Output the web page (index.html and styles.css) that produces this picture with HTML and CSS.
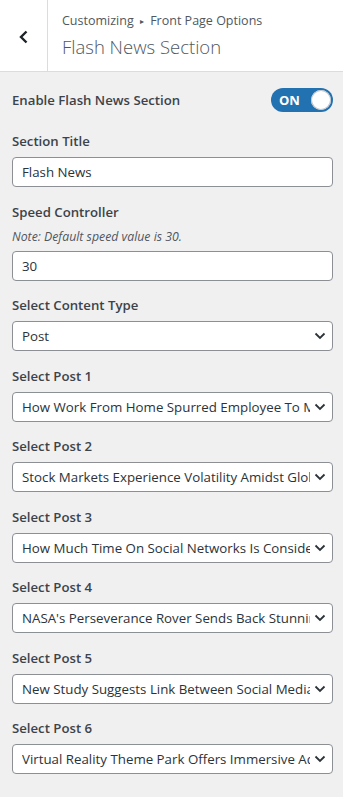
FILE: index.html
```html
<!DOCTYPE html>
<html lang="en">
<head>
<meta charset="UTF-8" />
<meta name="viewport" content="width=device-width, initial-scale=1" />
<title>Flash News Section</title>
<link rel="stylesheet" href="styles.css">
</head>
<body>
  <!-- Cabecera -->
  <header class="panel-head">
    <button class="back-btn" title="Back">
      <svg width="12" height="14" viewBox="0 0 12 14"><path d="M8.5 1.5 L3 7 L8.5 12.5" fill="none" stroke="#1d2327" stroke-width="2.4"/></svg>
    </button>
    <div class="head-text">
      <div class="crumbs">Customizing <span class="arrow">&#9656;</span> Front Page Options</div>
      <h1>Flash News Section</h1>
    </div>
  </header>

  <section class="controls">
    <div class="control toggle-row">
      <span class="label">Enable Flash News Section</span>
      <div class="toggle"><span>ON</span><i></i></div>
    </div>

    <div class="control">
      <span class="label">Section Title</span>
      <div class="field">Flash News</div>
    </div>

    <div class="control">
      <span class="label">Speed Controller</span>
      <span class="note">Note: Default speed value is 30.</span>
      <div class="field">30</div>
    </div>

    <div class="control">
      <span class="label">Select Content Type</span>
      <div class="field select"><span class="val">Post</span><svg class="chev" width="12" height="8" viewBox="0 0 12 8"><path d="M1.5 1.5 L6 6 L10.5 1.5" fill="none" stroke="#2c3338" stroke-width="1.8"/></svg></div>
    </div>

    <div id="posts"></div>
  </section>

<script>
  const posts = [
    'How Work From Home Spurred Employee To Make Changes',
    'Stock Markets Experience Volatility Amidst Global Uncertainty',
    'How Much Time On Social Networks Is Considered Healthy',
    "NASA's Perseverance Rover Sends Back Stunning Images",
    'New Study Suggests Link Between Social Media And Anxiety',
    'Virtual Reality Theme Park Offers Immersive Adventures'
  ];
  const contenedor = document.getElementById('posts');
  posts.forEach((titulo, i) => {
    const div = document.createElement('div');
    div.className = 'control';
    div.innerHTML = `
      <span class="label">Select Post ${i + 1}</span>
      <div class="field select"><span class="val">${titulo}</span><svg class="chev" width="12" height="8" viewBox="0 0 12 8"><path d="M1.5 1.5 L6 6 L10.5 1.5" fill="none" stroke="#2c3338" stroke-width="1.8"/></svg></div>
    `;
    contenedor.appendChild(div);
  });
</script>
</body>
</html>
```

FILE: styles.css
```css
body, html {
  margin: 0; padding: 0;
  font-family: "Open Sans", "Noto Sans", sans-serif;
  background: #f0f0f1;
  color: #2c3338;
}
.panel-head {
  display: flex;
  height: 72px;
  background: #fff;
  border-bottom: 1px solid #dcdcde;
  box-sizing: border-box;
}
.back-btn {
  width: 48px;
  border: none;
  border-right: 1px solid #dcdcde;
  background: #fff;
  display: flex;
  align-items: center;
  justify-content: center;
  padding: 0;
  padding-top: 2px;
}
.head-text {
  padding: 11px 0 0 14px;
  color: #50575e;
}
.crumbs {
  font-size: 12.5px;
  line-height: 20px;
}
.crumbs .arrow {
  font-size: 8px;
  margin: 0 3px;
  vertical-align: 1px;
}
h1 {
  margin: 3px 0 0;
  font-size: 18.5px;
  font-weight: 300;
  line-height: 26px;
}
.controls {
  padding: 16px 10px 0 12px;
}
.control {
  display: flex;
  flex-direction: column;
  margin-bottom: 14.5px;
}
.label {
  font-size: 13.2px;
  font-weight: 600;
  color: #3c434a;
  line-height: 20px;
  margin-bottom: 6px;
}
.note {
  font-size: 12.3px;
  font-style: italic;
  color: #50575e;
  line-height: 18px;
  margin: 0 0 5px;
}
.toggle-row {
  flex-direction: row;
  align-items: center;
  justify-content: space-between;
  margin: 0 0 19px;
}
.toggle-row .label { margin: 0; }
.toggle {
  width: 62px;
  height: 24px;
  border-radius: 12px;
  background: #2271b1;
  display: flex;
  align-items: center;
  justify-content: space-between;
  padding: 0 2px 0 8px;
  box-sizing: border-box;
}
.toggle span {
  color: #fff;
  font-size: 13px;
  font-weight: 700;
}
.toggle i {
  width: 20px;
  height: 20px;
  border-radius: 50%;
  background: #fff;
  box-shadow: inset 0 0 0 1px #c3c4c7;
}
.field {
  height: 30px;
  background: #fff;
  border: 1px solid #8c8f94;
  border-radius: 4px;
  box-sizing: border-box;
  padding: 0 9px;
  display: flex;
  align-items: center;
  font-size: 13.3px;
  color: #2c3338;
}
.select {
  padding-right: 6px;
}
.select .val {
  flex: 1;
  white-space: nowrap;
  overflow: hidden;
  min-width: 0;
}
.select .chev {
  flex: none;
  margin-left: 4px;
}
#posts .control:last-child {
  margin-bottom: 20px;
}
```
